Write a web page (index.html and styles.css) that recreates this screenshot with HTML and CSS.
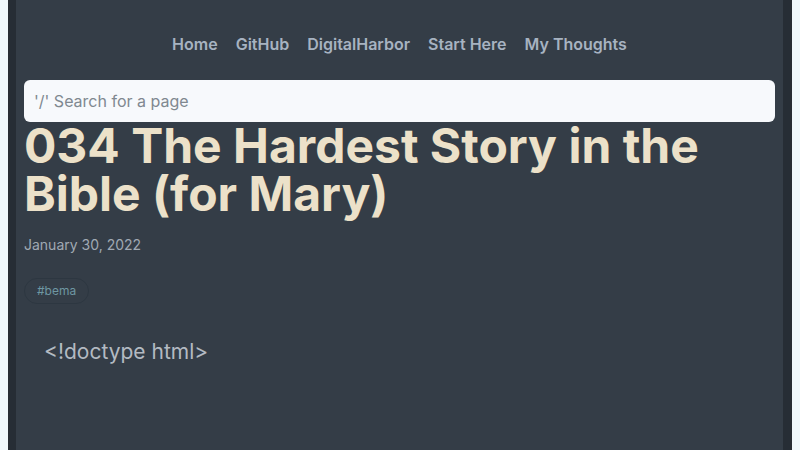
FILE: index.html
```html
<!DOCTYPE html>
<html lang="en">
<head>
<meta charset="utf-8">
<title>034 The Hardest Story in the Bible (for Mary)</title>
<link rel="stylesheet" href="styles.css">
</head>
<body>
<div class="frame">
  <div class="page">
    <nav class="nav">
      <a href="#">Home</a>
      <a href="#">GitHub</a>
      <a href="#">DigitalHarbor</a>
      <a href="#">Start Here</a>
      <a href="#">My Thoughts</a>
    </nav>
    <div class="search">'/' Search for a page</div>
    <h1 class="title">034 The Hardest Story in the Bible (for Mary)</h1>
    <div class="date">January 30, 2022</div>
    <div class="tags"><span class="tag">#bema</span></div>
    <div class="body-text">&lt;!doctype html&gt;</div>
  </div>
</div>
</body>
</html>
```
FILE: styles.css
```css
html, body {
  margin: 0;
  padding: 0;
  height: 100%;
}
body {
  background: #eff8fc;
  padding: 0 8px;
  box-sizing: border-box;
  font-family: Inter, "Noto Sans", sans-serif;
}
.frame {
  height: 100%;
  border-left: 8px solid #262d35;
  border-right: 9px solid #262d35;
  background: #343d47;
  box-sizing: border-box;
}
.page {
  padding: 0 8px;
}
.nav {
  display: flex;
  justify-content: center;
  gap: 18px;
  padding-top: 34px;
  margin-bottom: 26px;
}
.nav a {
  color: #a7b3c1;
  font-weight: 600;
  font-size: 16px;
  line-height: 20px;
  text-decoration: none;
}
.search {
  height: 42px;
  background: #f7f9fc;
  border-radius: 6px;
  color: #808890;
  font-size: 16px;
  line-height: 42px;
  padding-left: 10px;
}
.title {
  margin: 0;
  color: #ece1c9;
  font-size: 48px;
  font-weight: 700;
  line-height: 48px;
}
.date {
  margin-top: 17px;
  color: #a0a9b3;
  font-size: 14px;
  line-height: 20px;
}
.tags {
  margin-top: 23px;
  display: flex;
}
.tag {
  border: 1px solid #2d3741;
  border-radius: 13px;
  padding: 0 12px;
  height: 24px;
  line-height: 24px;
  font-size: 12px;
  color: #6e97a2;
}
.body-text {
  margin-top: 35px;
  padding-left: 20px;
  color: #b3bac2;
  font-size: 21px;
  line-height: 26px;
}
```
